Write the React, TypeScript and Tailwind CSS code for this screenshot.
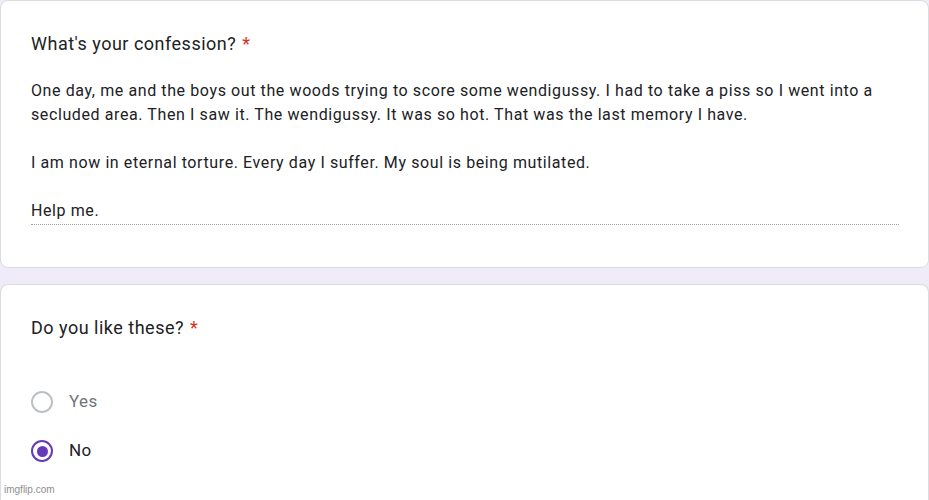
import React from 'react';

const font = { fontFamily: 'Roboto, Arial, sans-serif' };

function Required() {
  return <span className="ml-[6px] text-[#d93025]">*</span>;
}

function Radio({ label, checked }: { label: string; checked?: boolean }) {
  return (
    <div className="flex h-[24px] items-center">
      <span
        className={
          checked
            ? 'flex h-[22px] w-[22px] items-center justify-center rounded-full border-2 border-[#673ab7]'
            : 'flex h-[22px] w-[22px] items-center justify-center rounded-full border-2 border-[#bdc1c6]'
        }
      >
        {checked && <span className="h-[11px] w-[11px] rounded-full bg-[#673ab7]" />}
      </span>
      <span
        className={
          checked
            ? 'ml-[16px] text-[17px] tracking-[0.4px] text-[#202124]'
            : 'ml-[16px] text-[17px] tracking-[0.4px] text-[#70757a]'
        }
      >
        {label}
      </span>
    </div>
  );
}

export default function App() {
  return (
    <div
      className="relative flex h-[500px] w-[929px] flex-col gap-[16px] overflow-hidden bg-[#f0ebf8]"
      style={font}
    >
      <section className="h-[268px] shrink-0 rounded-[8px] border border-[#dadce0] bg-white pl-[30px] pr-[29px] pt-[31px]">
        <h2 className="text-[18px] leading-[24px] tracking-[0.5px] text-[#202124]">
          What's your confession?<Required />
        </h2>
        <div className="mt-[23px] border-b border-dotted border-[#9aa0a6] pb-[1px] text-[16px] leading-[24px] tracking-[0.6px] text-[#202124]">
          <p>
            One day, me and the boys out the woods trying to score some wendigussy. I had to take a piss so I went into a
            secluded area. Then I saw it. The wendigussy. It was so hot. That was the last memory I have.
          </p>
          <p className="mt-[24px]">I am now in eternal torture. Every day I suffer. My soul is being mutilated.</p>
          <p className="mt-[24px]">Help me.</p>
        </div>
      </section>

      <section className="flex-1 rounded-t-[8px] border border-b-0 border-[#dadce0] bg-white pl-[30px] pt-[31px]">
        <h2 className="text-[18px] leading-[24px] tracking-[0.5px] text-[#202124]">
          Do you like these?<Required />
        </h2>
        <div className="mt-[50px] flex flex-col gap-[25px]">
          <Radio label="Yes" />
          <Radio label="No" checked />
        </div>
      </section>

      <span
        className="absolute bottom-[3px] left-[4px] text-[10px] text-[#8e8e8e]"
        style={{ fontFamily: 'Arial, Liberation Sans, sans-serif' }}
      >
        imgflip.com
      </span>
    </div>
  );
}
